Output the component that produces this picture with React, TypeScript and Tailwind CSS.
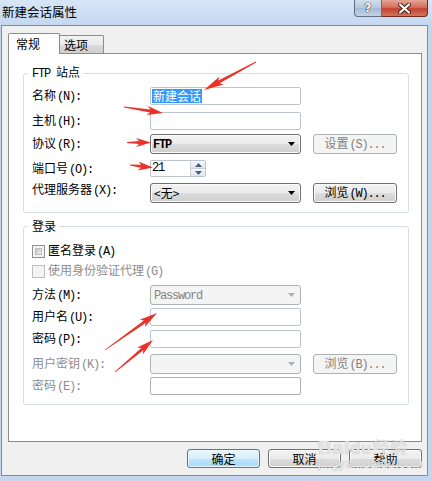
import React from "react";

const cjk = "font-['Noto_Sans_CJK_SC',sans-serif]";
const mono = "font-['Liberation_Mono',monospace]";
const latin = `${mono} text-[12px] tracking-[-1.2px]`;

type Pt = [number, number];

// red annotation arrows: tail, tip, head length
const arrows: [Pt, Pt, number][] = [
  [[256, 62], [204, 90], 20],
  [[124, 107], [163, 113], 16],
  [[127, 142.5], [151, 142.5], 15],
  [[130, 165], [153, 167.5], 15],
  [[105, 350], [157, 313], 18],
  [[115, 372], [153, 340], 17],
];

function arrowPoints([x1, y1]: Pt, [x2, y2]: Pt, head: number) {
  const dx = x2 - x1;
  const dy = y2 - y1;
  const len = Math.hypot(dx, dy);
  const ux = dx / len;
  const uy = dy / len;
  const at = (d: number, w: number) =>
    `${(x1 + ux * d - uy * w).toFixed(1)},${(y1 + uy * d + ux * w).toFixed(1)}`;
  const b = len - head;
  return [at(0, 0.4), at(b + 3, 1.5), at(b, 4.5), at(len, 0), at(b, -4.5), at(b + 3, -1.5), at(0, -0.4)].join(" ");
}

const Hint = ({ k }: { k: string }) => <span className={`${latin} ml-[1px]`}>({k}):</span>;

const Label = ({ t, k, off, top }: { t: string; k: string; off?: boolean; top?: boolean }) => (
  <div
    className={`w-[118px] shrink-0 leading-[12px] ${off ? "text-[#8d8d8d]" : "text-black"} ${
      top ? "self-start" : ""
    }`}
  >
    {t}
    <Hint k={k} />
  </div>
);

const Arrow = ({ off }: { off?: boolean }) => (
  <svg width="7" height="4" viewBox="0 0 7 4">
    <path d="M0 0h7L3.5 4z" fill={off ? "#b0b0b0" : "#000"} />
  </svg>
);

const Combo = ({ value, off }: { value: React.ReactNode; off?: boolean }) => (
  <div
    className={`w-[151px] h-[20px] flex items-center justify-between pl-[2px] pr-[5px] rounded-[3px] border ${
      off
        ? "border-[#adb2b5] bg-[#f4f4f4] text-[#838383]"
        : "border-[#707070] bg-[linear-gradient(#f2f2f2,#ebebeb_50%,#dddddd_50%,#cfcfcf)] shadow-[inset_0_0_0_1px_#fbfbfb] text-black"
    }`}
  >
    <span className="leading-[12px]">{value}</span>
    <Arrow off={off} />
  </div>
);

const Button = ({ t, k, off }: { t: string; k: string; off?: boolean }) => (
  <div
    className={`ml-[12px] w-[84px] h-[20px] flex items-center justify-center rounded-[3px] border ${
      off
        ? "border-[#adb2b5] bg-[#f4f4f4] text-[#838383]"
        : "border-[#707070] bg-[linear-gradient(#f2f2f2,#ebebeb_50%,#dddddd_50%,#cfcfcf)] shadow-[inset_0_0_0_1px_#fbfbfb] text-black"
    }`}
  >
    <span className="leading-[12px]">
      {t}
      <span className={`${latin} ml-[1px]`}>({k})...</span>
    </span>
  </div>
);

const TextBox = ({ children, off }: { children?: React.ReactNode; off?: boolean }) => (
  <div
    className={`w-[151px] h-[18px] flex items-center pl-[1px] rounded-[2px] border bg-white ${
      off ? "border-[#b0b0b0]" : "border-[#bcc5cf]"
    }`}
  >
    {children}
  </div>
);

const Check = ({ t, k, off }: { t: string; k: string; off?: boolean }) => (
  <div className={`h-[14px] flex items-center gap-[3px] ${off ? "text-[#8d8d8d]" : "text-black"}`}>
    <div
      className={`w-[13px] h-[13px] p-[2px] border ${
        off ? "border-[#c0c0c0] bg-[#f4f4f4]" : "border-[#8e8f8f] bg-[#f4f4f4]"
      }`}
    >
      <div
        className={`w-full h-full ${
          off ? "bg-[#f4f4f4]" : "bg-[linear-gradient(135deg,#c4c4c4,#f2f2f2)] border border-[#bdbdbd]"
        }`}
      />
    </div>
    <span className="leading-[12px]">
      {t}
      <span className={`${latin} ml-[1px]`}>({k})</span>
    </span>
  </div>
);

const Row = ({ className, children }: { className: string; children: React.ReactNode }) => (
  <div className={`flex items-center ${className}`}>{children}</div>
);

const Legend = ({ children }: { children: React.ReactNode }) => (
  <legend className="ml-[-4px] pl-[4px] pr-[3px] leading-[16px] text-black">{children}</legend>
);

const DialogButton = ({ t, primary }: { t: string; primary?: boolean }) => (
  <div
    className={`w-[73px] h-[19px] flex items-center justify-center rounded-[3px] border leading-[12px] ${
      primary
        ? "border-[#3c7fb1] bg-[linear-gradient(#eaf6fd,#d9f0fc_50%,#bee6fd_50%,#a7d9f5)] shadow-[inset_0_0_0_1px_#e8f6fd]"
        : "border-[#707070] bg-[linear-gradient(#f2f2f2,#ebebeb_50%,#dddddd_50%,#cfcfcf)] shadow-[inset_0_0_0_1px_#fbfbfb]"
    }`}
  >
    {t}
  </div>
);

export default function App() {
  return (
    <div className={`relative w-[432px] h-[481px] overflow-hidden bg-[#c3d6ed] ${cjk} text-[12px] text-black`}>
      {/* title bar */}
      <div className="h-[25px] flex items-start bg-[linear-gradient(#d7e6f7,#c4d8f0)]">
        <div className="pl-[2px] pt-[5px] text-[12.5px] leading-[14px]">新建会话属性</div>
        <div className="ml-auto mr-[4px] flex">
          <div className="w-[28px] h-[17px] flex items-center justify-center rounded-bl-[4px] border border-t-0 border-[#5f6f86] bg-[linear-gradient(#d3deec,#b5c7de_50%,#a6bad4_51%,#c2d2e6)]">
            <span className="font-['DejaVu_Sans',sans-serif] font-bold text-[12px] leading-[12px] text-white [text-shadow:0_0_1px_#2a3546,0_0_1px_#2a3546,0_0_1px_#2a3546]">
              ?
            </span>
          </div>
          <div className="w-[46px] h-[17px] flex items-center justify-center rounded-br-[4px] border border-t-0 border-l-0 border-[#6b2b22] bg-[linear-gradient(#e6a596,#d5705c_45%,#c2432e_55%,#d5735c)]">
            <svg width="13" height="11" viewBox="0 0 13 11">
              <path d="M2 1.5L11 9.5M11 1.5L2 9.5" stroke="#3a1f1a" strokeWidth="4" strokeLinecap="round" />
              <path d="M2 1.5L11 9.5M11 1.5L2 9.5" stroke="#fff" strokeWidth="2.2" strokeLinecap="round" />
            </svg>
          </div>
        </div>
      </div>

      {/* dialog body */}
      <div className="ml-[1px] w-[427px] h-[451px] border border-[#7d8ea4] bg-[#f0f0f0] flex flex-col pl-[6px] pr-[5px] pt-[7px]">
        {/* tabs */}
        <div className="h-[20px] flex items-end">
          <div className="relative z-10 w-[52px] h-[21px] -mb-px pl-[7px] pt-[3px] leading-[14px] bg-white border border-b-0 border-[#898c95] rounded-t-[2px]">
            常规
          </div>
          <div className="w-[44px] h-[18px] pl-[4px] pt-[2px] leading-[14px] border border-l-0 border-b-0 border-[#898c95] rounded-tr-[2px] bg-[linear-gradient(#f3f3f3,#ebebeb_50%,#dcdcdc_50%,#cfcfcf)]">
            选项
          </div>
        </div>

        {/* tab page */}
        <div className="h-[389px] border border-[#898c95] bg-white pt-[10px] pl-[14px]">
          <fieldset className="w-[386px] px-[8px] border border-[#d5dfe5] rounded-[3px]">
            <Legend>
              <span className={latin}>FTP </span>站点
            </Legend>
            <div className="flex flex-col pt-[5px] pb-[9px]">
              <Row className="h-[18px]">
                <Label t="名称" k="N" />
                <TextBox>
                  <span className="bg-[#3399ff] text-white leading-[14px] px-[1px]">新建会话</span>
                </TextBox>
              </Row>
              <Row className="h-[18px] mt-[7px]">
                <Label t="主机" k="H" />
                <TextBox />
              </Row>
              <Row className="h-[20px] mt-[4px]">
                <Label t="协议" k="R" />
                <Combo value={<span className={`${latin} font-bold`}>FTP</span>} />
                <Button t="设置" k="S" off />
              </Row>
              <Row className="h-[17px] mt-[6px]">
                <Label t="端口号" k="O" />
                <div className="w-[56px] h-[17px] flex border border-[#bcc5cf] rounded-[2px] bg-white">
                  <div className={`flex-1 pl-[1px] ${latin} leading-[15px]`}>21</div>
                  <div className="w-[15px] flex flex-col border-l border-[#c9d0d8]">
                    <div className="flex-1 flex items-center justify-center border-b border-[#c9d0d8] bg-[linear-gradient(#f6f8fb,#dfe6ee)]">
                      <svg width="7" height="4" viewBox="0 0 7 4">
                        <path d="M0 4h7L3.5 0z" fill="#4a5d7e" />
                      </svg>
                    </div>
                    <div className="flex-1 flex items-center justify-center bg-[linear-gradient(#f6f8fb,#dfe6ee)]">
                      <svg width="7" height="4" viewBox="0 0 7 4">
                        <path d="M0 0h7L3.5 4z" fill="#4a5d7e" />
                      </svg>
                    </div>
                  </div>
                </div>
              </Row>
              <Row className="h-[20px] mt-[6px]">
                <Label t="代理服务器" k="X" top />
                <Combo value={<span className="pl-[1px]">&lt;无&gt;</span>} />
                <Button t="浏览" k="W" />
              </Row>
            </div>
          </fieldset>

          <fieldset className="mt-[5px] w-[386px] px-[8px] border border-[#d5dfe5] rounded-[3px]">
            <Legend>登录</Legend>
            <div className="flex flex-col pt-[10px] pb-[9px]">
              <Check t="匿名登录" k="A" />
              <div className="mt-[6px]">
                <Check t="使用身份验证代理" k="G" off />
              </div>
              <Row className="h-[20px] mt-[7px]">
                <Label t="方法" k="M" />
                <Combo value={<span className={`${latin} pl-[1px]`}>Password</span>} off />
              </Row>
              <Row className="h-[18px] mt-[3px]">
                <Label t="用户名" k="U" />
                <TextBox />
              </Row>
              <Row className="h-[18px] mt-[4px]">
                <Label t="密码" k="P" />
                <TextBox />
              </Row>
              <Row className="h-[20px] mt-[6px]">
                <Label t="用户密钥" k="K" off />
                <Combo value="" off />
                <Button t="浏览" k="B" off />
              </Row>
              <Row className="h-[18px] mt-[3px]">
                <Label t="密码" k="E" off />
                <TextBox off />
              </Row>
            </div>
          </fieldset>
        </div>

        {/* dialog buttons */}
        <div className="mt-[7px] flex justify-end gap-[8px]">
          <DialogButton t="确定" primary />
          <DialogButton t="取消" />
          <DialogButton t="帮助" />
        </div>
      </div>

      {/* watermark */}
      <div className="pointer-events-none absolute left-[318px] top-[437px] flex flex-col items-start text-[#e4e4e4] [text-shadow:0_0_1px_#b8b8b8]">
        <span className="font-['Liberation_Sans',sans-serif] font-bold text-[19px] leading-[19px] tracking-[1px]">
          Bai<span className="text-[16px]">du</span>
          <span className={`${cjk} text-[17px] font-normal`}>经验</span>
        </span>
        <span className="font-['Liberation_Sans',sans-serif] text-[12px] leading-[13px] tracking-[0.5px]">
          jingyan.baidu.com
        </span>
      </div>

      {/* red annotation arrows */}
      <svg className="pointer-events-none absolute left-0 top-0" width="432" height="481" viewBox="0 0 432 481">
        {arrows.map(([a, b, h], i) => (
          <polygon key={i} points={arrowPoints(a, b, h)} fill="#ea3328" />
        ))}
      </svg>
    </div>
  );
}
